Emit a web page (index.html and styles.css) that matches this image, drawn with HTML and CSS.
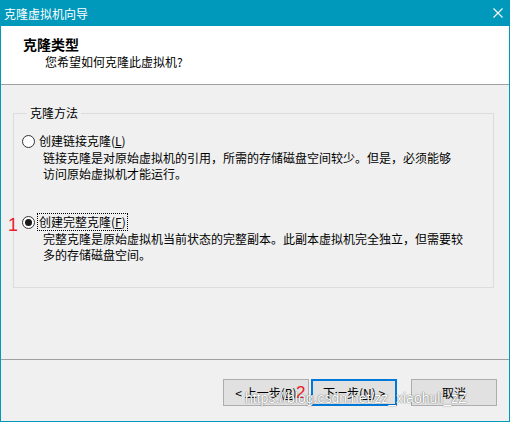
FILE: index.html
```html
<!DOCTYPE html>
<html lang="zh">

<head>
    <meta charset="UTF-8">
    <title>克隆虚拟机向导</title>
    <link rel="stylesheet" href="styles.css">
</head>

<body>
    <div class="window">
        <div class="titlebar">
            <span class="title">克隆虚拟机向导</span>
            <svg class="close" viewBox="0 0 10 10" width="10" height="10">
                <path d="M0.5 0.5 L9.5 9.5 M9.5 0.5 L0.5 9.5" stroke="#fff" stroke-width="1.1" fill="none" />
            </svg>
        </div>
        <div class="header">
            <div class="header-title">克隆类型</div>
            <div class="header-sub">您希望如何克隆此虚拟机?</div>
        </div>
        <div class="content">
            <fieldset class="group">
                <legend>克隆方法</legend>
                <div class="option">
                    <div class="option-head">
                        <span class="radio"></span>
                        <span class="option-label">创建链接克隆(<u>L</u>)</span>
                    </div>
                    <p class="option-desc">链接克隆是对原始虚拟机的引用，所需的存储磁盘空间较少。但是，必须能够<br>访问原始虚拟机才能运行。</p>
                </div>
                <div class="option option-full">
                    <div class="option-head">
                        <span class="radio checked"></span>
                        <span class="option-label focused">创建完整克隆(<u>F</u>)</span>
                    </div>
                    <p class="option-desc">完整克隆是原始虚拟机当前状态的完整副本。此副本虚拟机完全独立，但需要较<br>多的存储磁盘空间。</p>
                </div>
            </fieldset>
            <span class="mark mark-1">1</span>
        </div>
        <div class="footer">
            <button>&lt; 上一步(<u>B</u>)</button>
            <button class="default">下一步(<u>N</u>) &gt;</button>
            <button class="cancel">取消</button>
            <span class="mark mark-2">2</span>
            <span class="watermark">https://blog.csdn.net/zz_xiaohuli_zZ</span>
        </div>
    </div>
</body>

</html>
```

FILE: styles.css
```css
:root {
    --title-color: #0099bc;
    /* 标题栏颜色 */
    --panel-bg: #f0f0f0;
    /* 窗口背景 */
    --line-color: #a0a0a0;
    /* 分隔线 */
    --mark-color: #e8202a;
    /* 红色标注 */
}

body {
    margin: 0;
    font-family: "Noto Sans CJK SC", sans-serif;
    font-size: 12px;
    color: #000;
}

.window {
    width: 510px;
    height: 422px;
    box-sizing: border-box;
    border: 1px solid var(--title-color);
    background: var(--panel-bg);
    display: flex;
    flex-direction: column;
}

.titlebar {
    height: 25px;
    flex-shrink: 0;
    background: var(--title-color);
    color: #fff;
    display: flex;
    align-items: center;
    justify-content: space-between;
    padding: 0 6px 0 3px;
}

.title {
    line-height: 16px;
}

.close {
    display: block;
    margin-top: -1px;
}

.header {
    flex-shrink: 0;
    background: #fff;
    border-bottom: 1px solid var(--line-color);
    padding: 9px 0 0 22px;
    height: 49px;
}

.header-title {
    font-size: 14px;
    font-weight: bold;
    line-height: 18px;
}

.header-sub {
    margin: 1px 0 0 22px;
    line-height: 16px;
}

.content {
    flex: 1;
    position: relative;
    padding: 20px 15px 0 12px;
}

.group {
    margin: 0;
    padding: 0 0 24px 8px;
    border: 1px solid #dcdcdc;
}

.group legend {
    margin-left: 5px;
    padding: 0 3px;
    line-height: 16px;
}

.option {
    margin-top: 12px;
}

.option-full {
    margin-top: 32px;
}

.option-head {
    display: flex;
    align-items: center;
    gap: 3px;
    line-height: 16px;
}

.radio {
    width: 13px;
    height: 13px;
    box-sizing: border-box;
    border: 1px solid #333;
    border-radius: 50%;
    background: #fff;
    display: grid;
    place-items: center;
}

.radio.checked::after {
    content: "";
    width: 7px;
    height: 7px;
    border-radius: 50%;
    background: #1a1a1a;
}

.option-label {
    padding: 0 1px;
}

.option-label.focused {
    outline: 1px dotted #000;
}

.option-desc {
    margin: 1px 0 0 21px;
    line-height: 16px;
    white-space: nowrap;
}

.footer {
    position: relative;
    flex-shrink: 0;
    height: 42px;
    border-top: 1px solid var(--line-color);
    padding: 19px 12px 0 0;
    display: flex;
    justify-content: flex-end;
    align-items: flex-start;
}

.footer button {
    width: 86px;
    height: 27px;
    box-sizing: border-box;
    border: 1px solid #adadad;
    background: #e1e1e1;
    font-family: inherit;
    font-size: 12px;
    color: #000;
    padding: 0;
    margin-left: 2px;
}

.footer button.default {
    border: 2px solid #0078d7;
}

.footer button.cancel {
    margin-left: 14px;
}

.mark {
    position: absolute;
    color: var(--mark-color);
    font-family: "Liberation Sans", sans-serif;
}

.mark-1 {
    left: 7px;
    top: 131px;
    font-size: 18px;
    line-height: 18px;
}

.mark-2 {
    left: 295px;
    top: 24px;
    font-size: 17px;
    line-height: 17px;
}

.watermark {
    position: absolute;
    left: 244px;
    top: 30px;
    font-family: "Liberation Sans", sans-serif;
    font-size: 14px;
    line-height: 16px;
    color: #fff;
    text-shadow: 0 0 1px rgba(0, 0, 0, 0.6), 0 0 2px rgba(0, 0, 0, 0.25);
}
```
